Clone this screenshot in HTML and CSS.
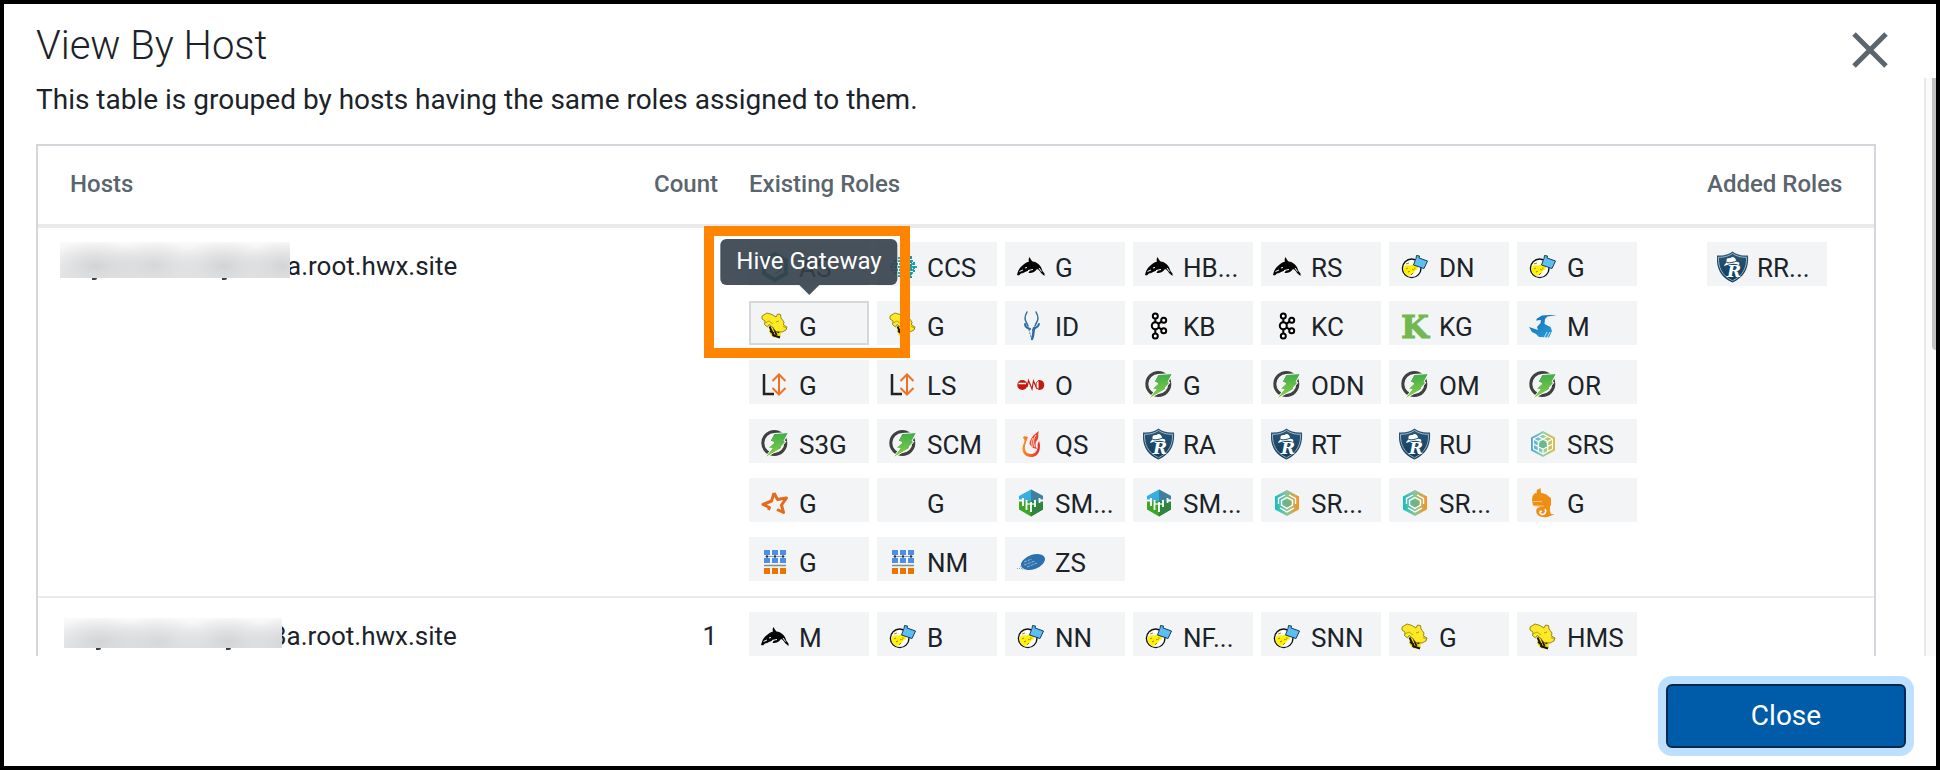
FILE: index.html
```
<!DOCTYPE html>
<html lang="en">
<head>
	<meta charset="utf-8">
	<meta name="viewport" content="width=device-width, initial-scale=1.0">
	<title>View By Host</title>
	<link rel="stylesheet" href="styles.css">
</head>
<body>
	<!-- service icons, used by the chips below -->
	<svg class="sprite" width="0" height="0" aria-hidden="true">
		<defs>
			<linearGradient id="bolt" x1="0" y1="0" x2="0" y2="1"><stop offset="0" stop-color="#3fae49"/><stop offset="1" stop-color="#8ccf4d"/></linearGradient>
			<linearGradient id="navy" x1="0" y1="0" x2="0" y2="1"><stop offset="0" stop-color="#2f5878"/><stop offset="1" stop-color="#0c3a57"/></linearGradient>
			<linearGradient id="flame" x1="0" y1="0" x2="1" y2="0"><stop offset="0" stop-color="#f7941d"/><stop offset="1" stop-color="#e9262b"/></linearGradient>
			<linearGradient id="sunset" x1="0" y1="0" x2="1" y2="0"><stop offset="0" stop-color="#12bfc0"/><stop offset="0.5" stop-color="#8fc29a"/><stop offset="1" stop-color="#f7941d"/></linearGradient>
			<linearGradient id="meadow" x1="0" y1="0" x2="1" y2="0"><stop offset="0" stop-color="#4aa5de"/><stop offset="0.5" stop-color="#8fd0a8"/><stop offset="1" stop-color="#dfb83a"/></linearGradient>
			<linearGradient id="water" x1="0" y1="0" x2="1" y2="1"><stop offset="0" stop-color="#1268b3"/><stop offset="1" stop-color="#2ba5e0"/></linearGradient>

			<symbol id="atlas" viewBox="0 0 32 32">
				<path d="M16 3L27 9.500V22.500L16 29L5 22.500V9.500Z" fill="none" stroke="#1a8f8a" stroke-width="4"/>
				<path d="M12 12L16 9L21 12V20L16 23" fill="none" stroke="#63c0b5" stroke-width="2"/>
			</symbol>
			<symbol id="cruise" viewBox="0 0 32 32">
				<path d="M11 7H24M7 10H26M4 13H27M3 16H30M4 19H27M7 22H26M11 25H24" stroke="#28a9bd" stroke-width="2" stroke-dasharray="3 1"/>
				<path d="M16 5V28M22 4V29" stroke="#1c7d9c" stroke-width="1" stroke-dasharray="2 2"/>
				<path d="M24 5V27M27 11V21" fill="none" stroke="#1799b0" stroke-width="2" stroke-dasharray="3 1"/>
			</symbol>
			<symbol id="hbase" viewBox="0 0 32 32">
				<path d="M2 24C3 20 4 17 8 14C10 12 12 11 14 10.500C13.500 9 13.500 7.500 14.500 6C15.500 8 16.500 9.500 17.500 10.500C22 11 26 14 27.500 20L29.500 22.500V25L26 22C25 20 23.500 18.500 22 18C20 21 17 22.500 13.500 22L15 19C11 20 9 22 6 22.500C5 23.500 4 25 2 24Z" fill="#050505"/>
				<path d="M4.500 20.500L8 19M13 19.500L18 18.500M24 17L26.500 20.500M10 17L12 16.500" stroke="#fff" stroke-width="1" fill="none"/>
			</symbol>
			<symbol id="hdfs" viewBox="0 0 32 32">
				<circle cx="12.700" cy="17.300" r="9.300" fill="#fff" stroke="#111" stroke-width="1.400"/>
				<path d="M4.500 18C5 13.500 9 13.500 12 14.500C14 12.500 19 13.500 19 17C18.500 19 16.500 19 15.500 20.500C15 23 12 22.500 11.500 24.500C8 25.500 5 22.500 4.500 18Z" fill="#fff200"/>
				<path d="M7 18L9 17M13 18C14 19.500 16 18.500 16 16.500M9 21L11 20M7 13L10 12M12 24L14 22" stroke="#9a8a10" fill="none"/>
				<path d="M17.500 4.500L20.500 5L20 7L28.500 10L25 17.500L14.500 14L16.500 8.500L17 7.500Z" fill="#5bbef5" stroke="#1c3c50"/>
			</symbol>
			<symbol id="hive" viewBox="0 0 32 32">
				<path d="M13 14L22 18L21.500 27L15 27.500C11 25 9.500 22 10.500 17Z" fill="#f5d90a"/>
				<path d="M10.500 16.500L15 26M14 16L17.500 25M18 17L19.500 23" stroke="#16130a" stroke-width="1.800"/>
				<path d="M11 21L15 23.500M13.500 25L21 27.500" stroke="#16130a" stroke-width="2"/>
				<path d="M3 6L8 3L13 4.500L17 7L18.500 4L21.500 4.500L22 8L25 12L24.500 15L28 17L27 20L23 22L17 21.500L13.500 17L10 14.500L8.500 17L5.500 14.500L6 11L3 9Z" fill="#fdea24" stroke="#7d6d15" stroke-width="0.800"/>
				<path d="M6 13L10 11L14 14M24 16.500L27.500 18M17 12L20 11" fill="none" stroke="#a08e20" stroke-width="0.800"/>
			</symbol>
			<symbol id="impala" viewBox="0 0 32 32">
				<g fill="none" stroke="#2e6da4" stroke-linecap="round">
					<path d="M12 2C8 9 11 11 13 16" stroke-width="1.500"/>
					<path d="M21 2C25 9 22 11 20 16" stroke-width="1.500"/>
					<path d="M10 14C10 18 13 18 15 19" stroke-width="2"/>
					<path d="M24 14C23 18 20 17 18 20" stroke-width="2"/>
					<path d="M19 18C18 22 19 25 17 29" stroke-width="2.500"/>
					<path d="M14 20L16 27" stroke-width="1" stroke-dasharray="1 2"/>
				</g>
			</symbol>
			<symbol id="kafka" viewBox="0 0 32 32">
				<g fill="#fff" stroke="#000" stroke-width="2">
					<path d="M12.300 6V26M12.300 15.700L20.700 10.300M12.300 15.700L20.700 20.700"/>
					<circle cx="12.300" cy="6" r="2.500"/>
					<circle cx="20.700" cy="10.300" r="2.500"/>
					<circle cx="12.300" cy="15.700" r="3.500"/>
					<circle cx="20.700" cy="20.700" r="2.500"/>
					<circle cx="12.300" cy="26" r="2.500"/>
				</g>
			</symbol>
			<symbol id="knox" viewBox="0 0 32 32">
				<text x="16" y="28" text-anchor="middle" class="logo-k">K</text>
			</symbol>
			<symbol id="kudu" viewBox="0 0 32 32">
				<path d="M29.500 5.200C24 4.800 19 4.800 15 5.500L10 8.500L9 10.500L14 10L13.500 13L10 17L11 20L2 17L5 22L9 24L12 27L22 27.500L25 21L23.500 17L17.500 14L18 9L20.500 6.500Z" fill="url(#water)"/>
				<path d="M20 22L17 28M23 22L20 28M26 21L23 28" stroke="#f3f4f6" stroke-width="0.800"/>
			</symbol>
			<symbol id="livy" viewBox="0 0 32 32">
				<path d="M5 5V25H15" fill="none" stroke="#222" stroke-width="2.500"/>
				<path d="M20 5.500V25.500M13.500 12L20 5.500L26.500 12M13.500 19L20 25.500L26.500 19" fill="none" stroke="#ef7125" stroke-width="2"/>
			</symbol>
			<symbol id="oozie" viewBox="0 0 32 32">
				<circle cx="7.300" cy="16" r="5" fill="#c3190f"/>
				<path d="M3.500 14.500H11" stroke="#fff" stroke-width="1.500"/>
				<path d="M12 18L13.500 11.500L17 20L18.500 12L22 20" fill="none" stroke="#c3190f" stroke-width="1.200"/>
				<path d="M24 11.500C20 13 20 19 24 20.500Z" fill="#fff" stroke="#c3190f"/>
				<path d="M24 11C31 10.500 31 21.500 24 21Z" fill="#c3190f"/>
			</symbol>
			<symbol id="ozone" viewBox="0 0 32 32">
				<circle cx="15.300" cy="15" r="11.500" fill="none" stroke="#404040" stroke-width="3"/>
				<path d="M15 5.500L29.500 4.500L25 13L27 13.500L22 19L23 20L5 30.500L13 20.500L9 20L15 14.500L11 13Z" fill="url(#bolt)" stroke="#fff" stroke-width="1"/>
			</symbol>
			<symbol id="phoenix" viewBox="0 0 32 32">
				<path d="M8 10C8 8 10 7.500 13 9C12.500 11 11 13 10.500 16C8.500 21 11 26 16 26C21 26 23.500 21 22.500 16L24 13C26 18 25.500 29 16 29C7 29 6 20 9 15C10 12 9.500 11.500 8 10Z" fill="url(#flame)"/>
				<path d="M24 3C18 7 15 11 14.500 16L18 20L22 21C20 18 20 14 23 11C24 8 22.500 6 24 3Z" fill="#ee4527"/>
				<path d="M21 7C18 11 18 15 20 19M18 10C16 13 16.500 17 18 19" fill="none" stroke="#fff" stroke-width="0.800"/>
			</symbol>
			<symbol id="ranger" viewBox="0 0 32 32">
				<path d="M15.500 0.500C19 3.500 25 5 31 4.500C32 16 28 26 15.500 31.500C3 26 -1 16 0 4.500C6 5 12 3.500 15.500 0.500Z" fill="url(#navy)"/>
				<path d="M15.500 2.500C19 5 24 6.500 29.500 6.300C30 16 26 25 15.500 29.700C5 25 1 16 1.500 6.300C7 6.500 12 5 15.500 2.500Z" fill="none" stroke="#b9cbd8" stroke-width="0.800"/>
				<path d="M7 15C8 12 10 12.500 9.500 9C10 6 13 8 15 6C18 6 19 8 19.500 11C22 10.500 23 12 22 14C17 11.500 12 13 7 15Z" fill="#fff"/>
				<path d="M9.500 11.500C13 12.500 17 11 19.500 10" stroke="#1c4867" fill="none"/>
				<text x="17" y="26" text-anchor="middle" class="logo-r">R</text>
			</symbol>
			<symbol id="registry" viewBox="0 0 32 32">
				<path d="M16 3L28 9.500V22.500L16 29L4 22.500V9.500Z" fill="url(#meadow)"/>
				<path d="M16 6L25.500 11V21L16 26L6.500 21V11L16 16L25.500 11M6.500 11L16 6M16 16V26M6.500 16L16 21L25.500 16M11.300 8.500L20.700 13.500V23.500M20.700 8.500L11.300 13.500V23.500" fill="none" stroke="#fff" stroke-width="1.200"/>
				<path d="M16 12.500L19.500 14.500V18.500L16 20.500L12.500 18.500V14.500Z" fill="#69b98c"/>
			</symbol>
			<symbol id="spark" viewBox="0 0 32 32">
				<path d="M15 6L18.500 12.500L27.500 11L22.500 18L24.500 25.500L18 22.500M15 6L12.500 14L4 17.500L10.500 20.500L9.500 23" fill="none" stroke="#e26b1e" stroke-width="3" stroke-linejoin="round"/>
			</symbol>
			<symbol id="smm" viewBox="0 0 32 32">
				<path d="M16 2.500L28 9V16H4V9Z" fill="#38ade0"/>
				<path d="M16 2.500L28 9V16H16Z" fill="#417f9e"/>
				<path d="M4 14H28V22.500L16 29.500L4 22.500Z" fill="#3da62a"/>
				<path d="M16 29.500L28 22.500V14H16Z" fill="#2e8540"/>
				<path d="M4 13.500H8M24.500 13.500H28M8 11V19M11.500 13V23M16 15V25M20 13V20M24.500 11V16" fill="none" stroke="#fff" stroke-width="1.800"/>
				<path d="M11.500 17H20" stroke="#fff" stroke-width="1.200"/>
			</symbol>
			<symbol id="srm" viewBox="0 0 32 32">
				<path d="M16 3L28 9.500V22.500L16 29L4 22.500V9.500Z" fill="url(#sunset)"/>
				<path d="M7.500 17V11.500L14 8M18 8L24.500 11.500V17M9 21L16 25L23 21M10.500 18V13.500L16 10.500L21.500 13.500V18L16 21.500Z" fill="none" stroke="#fff" stroke-width="1.400"/>
				<path d="M16 12.500L20 14.500V18L16 20L12 18V14.500Z" fill="#6fb583"/>
			</symbol>
			<symbol id="tez" viewBox="0 0 32 32">
				<path d="M5.500 9L8 6L9.500 6.500L10 3L13.500 1L14 6C18 7 20 7 21 9L24 11V18C22 20 23 25 24 27L27.500 27.500L23 29C19 31 13 31 10 27C8 23 10 20 14 20L6 18.500L5 13Z" fill="#ef8e14"/>
				<path d="M18 22C20 25 17 28.500 14 27C12 25.500 13 23.500 15 24.500" fill="none" stroke="#fff" stroke-width="1.500"/>
				<path d="M6 14.500H15M8 19H17" stroke="#fbd6a0" stroke-width="0.800"/>
			</symbol>
			<symbol id="yarn" viewBox="0 0 32 32">
				<path d="M5 4H11V9H5ZM13 4H19V9H13ZM21 4H27V9H21ZM5 12H11V17H5ZM13 12H19V17H13ZM21 12H27V17H21Z" fill="#4d8fe6"/>
				<path d="M8 9V12M16 9V12M24 9V12M6 10.500H26" stroke="#7f9cc4" stroke-width="1"/>
				<path d="M7 10.500H9M15 10.500H17M23 10.500H25" stroke="#333" stroke-width="2"/>
				<path d="M5 19.500H27" stroke="#888" stroke-width="1.500"/>
				<path d="M5 22H11V28H5ZM13 22H19V28H13ZM21 22H27V28H21Z" fill="#e87500"/>
			</symbol>
			<symbol id="zeppelin" viewBox="0 0 32 32">
				<ellipse cx="18" cy="16" rx="12.500" ry="7.200" transform="rotate(-20 18 16)" fill="#2e70ad"/>
				<path d="M9 16L17 13M9 19L20 15M12 21L22 17" stroke="#a9c8e2" stroke-width="0.800" stroke-dasharray="3 1"/>
				<path d="M2 22.500H10M5 20L8 24" stroke="#7ea8cd" stroke-width="1" stroke-dasharray="1 1"/>
			</symbol>
		</defs>
	</svg>

	<div class="modal" role="dialog" aria-labelledby="title">
		<header class="modal-header">
			<h1 id="title">View By Host</h1>
			<button type="button" class="dismiss" aria-label="Dismiss">
				<svg width="36" height="36" viewBox="0 0 36 36"><path d="M2 2L34 34M34 2L2 34" stroke="#5a656d" stroke-width="5"/></svg>
			</button>
		</header>

		<div class="modal-body">
			<p class="intro">This table is grouped by hosts having the same roles assigned to them.</p>
			<table class="hosts">
				<thead>
					<tr>
						<th class="col-host">Hosts</th>
						<th class="col-count">Count</th>
						<th>Existing Roles</th>
						<th class="col-added">Added Roles</th>
					</tr>
				</thead>
				<tbody>
					<tr>
						<td class="col-host"><div class="host"><span class="mask"></span><span class="name">a.root.hwx.site</span></div></td>
						<td class="col-count"></td>
						<td>
							<div class="chips">
								<span class="chip"><svg class="icon"><use href="#atlas"/></svg>AS</span>
								<span class="chip"><svg class="icon"><use href="#cruise"/></svg>CCS</span>
								<span class="chip"><svg class="icon"><use href="#hbase"/></svg>G</span>
								<span class="chip"><svg class="icon"><use href="#hbase"/></svg>HB...</span>
								<span class="chip"><svg class="icon"><use href="#hbase"/></svg>RS</span>
								<span class="chip"><svg class="icon"><use href="#hdfs"/></svg>DN</span>
								<span class="chip"><svg class="icon"><use href="#hdfs"/></svg>G</span>
								<span class="chip active"><svg class="icon"><use href="#hive"/></svg>G
									<span class="tooltip" role="tooltip">Hive Gateway</span>
									<span class="highlight"></span>
								</span>
								<span class="chip"><svg class="icon"><use href="#hive"/></svg>G</span>
								<span class="chip"><svg class="icon"><use href="#impala"/></svg>ID</span>
								<span class="chip"><svg class="icon"><use href="#kafka"/></svg>KB</span>
								<span class="chip"><svg class="icon"><use href="#kafka"/></svg>KC</span>
								<span class="chip"><svg class="icon"><use href="#knox"/></svg>KG</span>
								<span class="chip"><svg class="icon"><use href="#kudu"/></svg>M</span>
								<span class="chip"><svg class="icon"><use href="#livy"/></svg>G</span>
								<span class="chip"><svg class="icon"><use href="#livy"/></svg>LS</span>
								<span class="chip"><svg class="icon"><use href="#oozie"/></svg>O</span>
								<span class="chip"><svg class="icon"><use href="#ozone"/></svg>G</span>
								<span class="chip"><svg class="icon"><use href="#ozone"/></svg>ODN</span>
								<span class="chip"><svg class="icon"><use href="#ozone"/></svg>OM</span>
								<span class="chip"><svg class="icon"><use href="#ozone"/></svg>OR</span>
								<span class="chip"><svg class="icon"><use href="#ozone"/></svg>S3G</span>
								<span class="chip"><svg class="icon"><use href="#ozone"/></svg>SCM</span>
								<span class="chip"><svg class="icon"><use href="#phoenix"/></svg>QS</span>
								<span class="chip"><svg class="icon"><use href="#ranger"/></svg>RA</span>
								<span class="chip"><svg class="icon"><use href="#ranger"/></svg>RT</span>
								<span class="chip"><svg class="icon"><use href="#ranger"/></svg>RU</span>
								<span class="chip"><svg class="icon"><use href="#registry"/></svg>SRS</span>
								<span class="chip"><svg class="icon"><use href="#spark"/></svg>G</span>
								<span class="chip"><span class="icon"></span>G</span>
								<span class="chip"><svg class="icon"><use href="#smm"/></svg>SM...</span>
								<span class="chip"><svg class="icon"><use href="#smm"/></svg>SM...</span>
								<span class="chip"><svg class="icon"><use href="#srm"/></svg>SR...</span>
								<span class="chip"><svg class="icon"><use href="#srm"/></svg>SR...</span>
								<span class="chip"><svg class="icon"><use href="#tez"/></svg>G</span>
								<span class="chip"><svg class="icon"><use href="#yarn"/></svg>G</span>
								<span class="chip"><svg class="icon"><use href="#yarn"/></svg>NM</span>
								<span class="chip"><svg class="icon"><use href="#zeppelin"/></svg>ZS</span>
							</div>
						</td>
						<td class="col-added">
							<div class="chips">
								<span class="chip"><svg class="icon"><use href="#ranger"/></svg>RR...</span>
							</div>
						</td>
					</tr>
					<tr>
						<td class="col-host"><div class="host short"><span class="mask"></span><span class="name">3a.root.hwx.site</span></div></td>
						<td class="col-count">1</td>
						<td>
							<div class="chips">
								<span class="chip"><svg class="icon"><use href="#hbase"/></svg>M</span>
								<span class="chip"><svg class="icon"><use href="#hdfs"/></svg>B</span>
								<span class="chip"><svg class="icon"><use href="#hdfs"/></svg>NN</span>
								<span class="chip"><svg class="icon"><use href="#hdfs"/></svg>NF...</span>
								<span class="chip"><svg class="icon"><use href="#hdfs"/></svg>SNN</span>
								<span class="chip"><svg class="icon"><use href="#hive"/></svg>G</span>
								<span class="chip"><svg class="icon"><use href="#hive"/></svg>HMS</span>
							</div>
						</td>
						<td class="col-added"></td>
					</tr>
				</tbody>
			</table>
			<div class="scrollbar"><div class="thumb"></div></div>
		</div>

		<footer class="modal-footer">
			<button type="button" class="close">Close</button>
		</footer>
	</div>
</body>
</html>
```
FILE: styles.css
```
* {
	box-sizing: border-box;
}
body {
	margin: 0;
	font-family: Roboto, "Liberation Sans", sans-serif;
	font-size: 26px;
	color: #1b2329;
}
.sprite {
	position: absolute;
}
.modal {
	display: flex;
	flex-direction: column;
	height: 100vh;
	border: 4px solid #000;
	background-color: #fff;
}

/* Header */
.modal-header {
	display: flex;
	justify-content: space-between;
	flex: none;
	height: 74px;
	padding: 18px 48px 0 32px;
}
.modal-header h1 {
	margin: 0;
	font-size: 40px;
	line-height: 48px;
	font-weight: 300;
}
.dismiss {
	height: 36px;
	margin-top: 10px;
	padding: 0;
	border: none;
	background: none;
}
.dismiss svg {
	display: block;
}

/* Scrolling part */
.modal-body {
	position: relative;
	flex: 1;
	min-height: 0;
	overflow: hidden;
	padding: 0 60px 0 32px;
}
.intro {
	margin: 0 0 22px;
	font-size: 28px;
	line-height: 44px;
}
.scrollbar {
	position: absolute;
	top: 0;
	right: 0;
	bottom: 0;
	width: 12px;
	border-left: 2px solid #e8e8e8;
	background-color: #fafafa;
}
.thumb {
	width: 4px;
	height: 47%;
	margin-left: auto;
	border-radius: 0 0 0 6px;
	background-color: #c1c1c1;
}

/* Table */
.hosts {
	width: 100%;
	border: 2px solid #d5d5dc;
	border-spacing: 0;
	table-layout: fixed;
}
.hosts th {
	height: 82px;
	padding: 0 16px 2px;
	border-bottom: 4px solid #e9eaec;
	color: #5a656d;
	font-size: 24px;
	font-weight: 500;
	line-height: 32px;
	text-align: left;
}
.hosts td {
	padding: 14px 16px 15px;
	border-bottom: 2px solid #e9eaec;
	line-height: 48px;
	vertical-align: top;
}
.hosts .col-host {
	width: 600px;
	padding-left: 32px;
}
.hosts .col-count {
	width: 95px;
	text-align: right;
}
.hosts .col-added {
	width: 183px;
	white-space: nowrap;
}

/* Redacted part of the host name */
.host {
	display: flex;
	height: 44px;
	margin-left: -10px;
}
.mask {
	position: relative;
	z-index: 1;
	width: 230px;
	height: 36px;
	background:
		radial-gradient(ellipse 50px 26px at 36px 24px, #d3d4d6, transparent),
		radial-gradient(ellipse 50px 26px at 94px 24px, #d6d7d9, transparent),
		radial-gradient(ellipse 50px 26px at 164px 24px, #d3d4d6, transparent),
		radial-gradient(ellipse 40px 26px at 222px 24px, #d3d4d6, transparent),
		linear-gradient(#fafafa, #e6e8e8);
}
/* descenders that stick out under the mask */
.mask::before,
.mask::after {
	content: "";
	position: absolute;
	top: 100%;
	left: 32px;
	width: 5px;
	height: 2px;
	border-radius: 0 0 3px 0;
	background-color: #3a4147;
}
.mask::after {
	left: 162px;
}
.name {
	margin-left: -3px;
}
.short {
	margin-left: -6px;
}
.short .mask {
	width: 218px;
	height: 30px;
	margin-top: 6px;
}
.short .name {
	margin-left: -10px;
}

/* Role chips */
.chips {
	display: flex;
	flex-wrap: wrap;
	gap: 15px 8px;
}
.chip {
	position: relative;
	display: flex;
	align-items: center;
	width: 120px;
	height: 44px;
	padding: 8px 0 0 8px;
	border: 2px solid #f3f4f6;
	background-color: #f3f4f6;
	line-height: 32px;
	white-space: nowrap;
}
.chip.active {
	border-color: #d5d7db;
}
.icon {
	flex: none;
	width: 32px;
	height: 32px;
	margin: 0 8px 2px 0;
}
.logo-k {
	font-family: "DejaVu Serif", serif;
	font-size: 32px;
	font-weight: bold;
	fill: #72b84f;
	stroke: #72b84f;
	stroke-width: 1px;
}
.logo-r {
	font-family: "DejaVu Serif", serif;
	font-size: 17px;
	font-weight: bold;
	font-style: italic;
	fill: #fff;
}

/* Tooltip and the frame around it */
.tooltip {
	position: absolute;
	z-index: 2;
	left: 50%;
	bottom: 58px;
	padding: 6px 16px 8px;
	border-radius: 6px;
	background-color: rgba(52, 63, 74, 0.9);
	color: #fff;
	font-size: 24px;
	transform: translateX(-50%);
}
.tooltip::after {
	content: "";
	position: absolute;
	top: 100%;
	left: 50%;
	margin-left: -10px;
	border: 10px solid transparent;
	border-top-color: rgba(52, 63, 74, 0.9);
	border-bottom: none;
}
.highlight {
	position: absolute;
	z-index: 1;
	top: -77px;
	left: -47px;
	width: 206px;
	height: 132px;
	border: 10px solid #ff8500;
}

/* Footer */
.modal-footer {
	display: flex;
	justify-content: flex-end;
	flex: none;
	padding: 28px 30px 18px;
}
.close {
	width: 240px;
	height: 64px;
	padding: 0 0 2px;
	border: 2px solid #06294d;
	border-radius: 6px;
	outline: none;
	background-color: #005ca8;
	box-shadow: 0 0 0 8px #bde0ff;
	color: #fff;
	font-family: inherit;
	font-size: 28px;
}
```
